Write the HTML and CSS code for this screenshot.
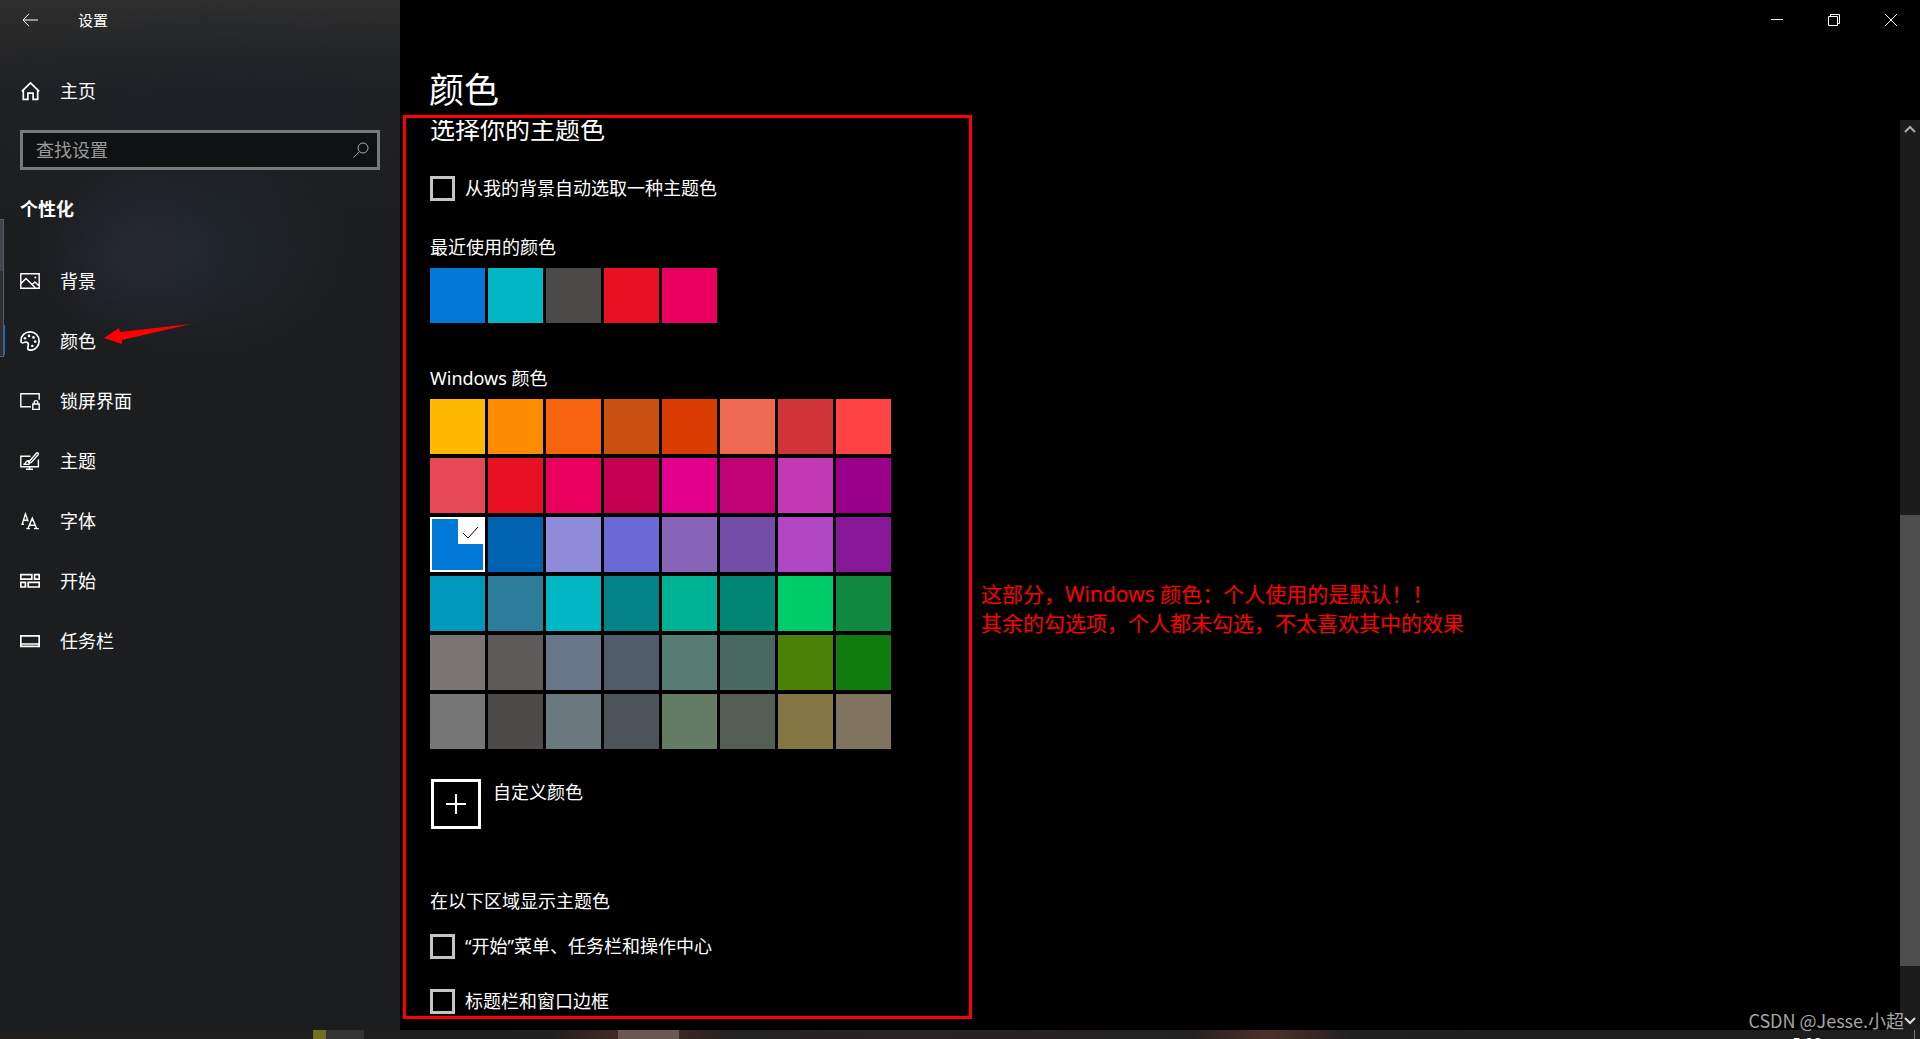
FILE: index.html
```html
<!DOCTYPE html>
<html lang="zh-CN">
<head>
<meta charset="utf-8">
<title>设置</title>
<link rel="stylesheet" href="styles.css">
</head>
<body>
<div class="app">
  <aside class="sidebar">
    <header class="side-title">
      <button class="back" type="button" aria-label="返回"><svg width="16" height="14" viewBox="0 0 16 14"><path d="M7 .8 1 7l6 6.2M1 7h15"/></svg></button>
      <span>设置</span>
    </header>
    <a class="nav-link home" href="#home">
      <svg class="icon bold" width="20" height="20" viewBox="0 0 20 20"><path d="M1.8 10.4 10.5 1.9l8.7 8.5M3.3 9v9.4h4.6v-6.2h5.2v6.2h4.6V9"/></svg>
      <span>主页</span>
    </a>
    <label class="search">
      <input type="text" placeholder="查找设置" aria-label="查找设置">
      <svg width="16" height="16" viewBox="0 0 16 16"><circle cx="10" cy="6" r="5"/><path d="M6.4 9.6.5 15.5"/></svg>
    </label>
    <h2 class="group">个性化</h2>
    <nav class="nav">
      <a class="nav-link" href="#background">
        <svg class="icon" width="20" height="20" viewBox="0 0 20 20"><path d="M.8 2.8h18.4v14.4H.8zM1 12.6l5-5.2 9.3 9.3M12.3 13.4l2.6-2.5 4.3 4.2"/><circle class="dot" cx="15.3" cy="6.6" r="1"/></svg>
        <span>背景</span></a>
      <a class="nav-link current" href="#colors">
        <svg class="icon bold" width="20" height="20" viewBox="0 0 20 20"><path d="M.9 9.9C.9 4.7 5 .9 10.2.9c5 0 8.9 3.9 8.9 9s-3.9 9.3-8.1 9.3c-2.3 0-3.3-.9-3.3-2.3 0-1.1.7-1.8.7-3 0-1.8-1.2-2.9-2.8-2.9-1.3 0-2 .8-3.1.8-1 0-1.6-.7-1.6-1.9z"/><circle class="dot" cx="5" cy="7.2" r="1.3"/><circle class="dot" cx="9" cy="4.9" r="1.3"/><circle class="dot" cx="13.5" cy="6.4" r="1.3"/><circle class="dot" cx="15.2" cy="10.6" r="1.3"/><circle class="dot" cx="12.3" cy="15" r="1.3"/></svg>
        <span>颜色</span></a>
      <a class="nav-link" href="#lock">
        <svg class="icon" width="20" height="20" viewBox="0 0 20 20"><path d="M11 15.8H.8V2.8h18.4v6M12.8 13h6.4v5.4h-6.4zM14.2 13v-1.6a1.8 1.8 0 0 1 3.6 0V13"/></svg>
        <span>锁屏界面</span></a>
      <a class="nav-link" href="#themes">
        <svg class="icon" width="20" height="20" viewBox="0 0 20 20"><path d="M10.5 5.2H.8v10.6h17.6V8.6M9.5 16v2M6 18.3h7M3.4 13.3c1.8 0 2-.8 2.4-2 .5-1.5 2.6-2 3.6-.8s.4 2.6-1.1 2.9zM9.4 10.3l7-8.1c1-1 2.6.3 1.7 1.5l-7.2 8.2M7.6 10l1.8 2"/></svg>
        <span>主题</span></a>
      <a class="nav-link" href="#fonts">
        <svg class="icon" width="20" height="20" viewBox="0 0 20 20"><path d="M2.2 13.2 5.4 3l2.8 7.6M3.4 9.2h3.7M1.4 13.3H4M8 17.6l4.3-10.4 4.3 10.4M9.4 14.2h5.7M6.4 17.6h3.5M14 17.6h4.8"/></svg>
        <span>字体</span></a>
      <a class="nav-link" href="#start">
        <svg class="icon bold" width="20" height="20" viewBox="0 0 20 20"><path d="M.8 3.6h11v4.6H.8zM14.6 3.6h4.6v4.6h-4.6zM.8 11.4h4.6V16H.8zM8.2 11.4h11V16h-11z"/></svg>
        <span>开始</span></a>
      <a class="nav-link" href="#taskbar">
        <svg class="icon bold" width="20" height="20" viewBox="0 0 20 20"><path d="M.8 4.8h18.4v10.6H.8zM1 13h18"/></svg>
        <span>任务栏</span></a>
    </nav>
    <div class="edge-panel"></div>
    <svg class="pointer" width="88" height="22" viewBox="0 0 88 22"><path d="M0 15 15 5l1 4 71-8-69 16 0 4z"/></svg>
  </aside>

  <main class="main">
    <header class="caption">
      <button type="button" aria-label="最小化"><svg width="12" height="12" viewBox="0 0 12 12"><path d="M0 5.5h12"/></svg></button>
      <button type="button" aria-label="还原"><svg width="12" height="12" viewBox="0 0 12 12"><path d="M.5 2.5h9v9h-9zM2.5 2.5v-2h9v9h-2"/></svg></button>
      <button type="button" aria-label="关闭"><svg width="12" height="12" viewBox="0 0 12 12"><path d="m0 0 12 12M12 0 0 12"/></svg></button>
    </header>
    <h1>颜色</h1>
    <div class="viewport">
      <div class="content">
        <h2>选择你的主题色</h2>
        <label class="check auto"><input type="checkbox"><span>从我的背景自动选取一种主题色</span></label>
        <h3>最近使用的颜色</h3>
        <div class="swatches recent">
          <button class="blue" aria-label="蓝色"></button><button class="seafoam" aria-label="浅海蓝"></button><button class="grey-dark" aria-label="深灰"></button><button class="red" aria-label="红色"></button><button class="rose-bright" aria-label="玫瑰红"></button>
        </div>
        <h3>Windows 颜色</h3>
        <div class="swatches">
          <button class="gold-yellow"></button><button class="gold"></button><button class="orange-bright"></button><button class="orange-dark"></button><button class="rust"></button><button class="rust-pale"></button><button class="brick"></button><button class="red-mod"></button>
          <button class="red-pale"></button><button class="red"></button><button class="rose-bright"></button><button class="rose"></button><button class="plum-light"></button><button class="plum"></button><button class="orchid-light"></button><button class="orchid"></button>
          <button class="blue selected" aria-label="默认蓝" aria-pressed="true"><svg width="25" height="25" viewBox="0 0 25 25"><path d="m5 14 5 5L20 8"/></svg></button><button class="navy"></button><button class="purple-shadow"></button><button class="purple-dark"></button><button class="iris"></button><button class="iris-spring"></button><button class="violet-light"></button><button class="violet"></button>
          <button class="cool-bright"></button><button class="cool"></button><button class="seafoam"></button><button class="seafoam-teal"></button><button class="mint-light"></button><button class="mint-dark"></button><button class="turf"></button><button class="sport"></button>
          <button class="grey"></button><button class="grey-brown"></button><button class="steel"></button><button class="metal"></button><button class="moss-pale"></button><button class="moss"></button><button class="meadow"></button><button class="green"></button>
          <button class="overcast"></button><button class="grey-dark"></button><button class="storm-light"></button><button class="storm"></button><button class="liddy"></button><button class="sage"></button><button class="camo-desert"></button><button class="camo"></button>
        </div>
        <button class="custom" type="button">
          <span class="plus"><svg width="20" height="20" viewBox="0 0 20 20"><path d="M10 0v20M0 10h20"/></svg></span>
          <span>自定义颜色</span>
        </button>
        <h3 class="areas">在以下区域显示主题色</h3>
        <label class="check"><input type="checkbox"><span>“开始”菜单、任务栏和操作中心</span></label>
        <label class="check"><input type="checkbox"><span>标题栏和窗口边框</span></label>
      </div>
      <div class="scrollbar">
        <svg width="12" height="20" viewBox="0 0 12 20"><path d="m1 12 5-5 5 5"/></svg>
        <div class="track"><div class="thumb"></div></div>
        <svg class="down" width="12" height="20" viewBox="0 0 12 20"><path d="m1 8 5 5 5-5"/></svg>
      </div>
    </div>
    <div class="frame"></div>
    <p class="note">这部分，Windows 颜色：个人使用的是默认！！<br>其余的勾选项，个人都未勾选，不太喜欢其中的效果</p>
    <p class="credit">CSDN @Jesse.小超</p>
  </main>
</div>
<footer class="taskbar">
  <span class="item yellow"></span><span class="item dim"></span><span class="item active"></span>
  <span class="clock">5:00</span><span class="peek"></span>
</footer>
</body>
</html>
```
FILE: styles.css
```css
* { box-sizing: border-box; }

body {
  margin: 0;
  min-height: 100vh;
  display: flex;
  flex-direction: column;
  background: #000;
  color: #fff;
  font: 18px/24px "Noto Sans", "Noto Sans CJK SC", sans-serif;
}

h1, h2, h3, p { margin: 0; font-weight: 400; }
h3 { font-size: 18px; }
button { padding: 0; border: 0; background: none; color: inherit; font: inherit; }
svg { display: block; flex: none; fill: none; stroke: #fff; }
a { color: inherit; text-decoration: none; }

.app { flex: 1; display: flex; }

/* Sidebar */
.sidebar {
  position: relative;
  flex: none;
  width: 400px;
  background:
    radial-gradient(ellipse 100px 90px at 135px 255px, rgba(48, 46, 68, .5), transparent),
    radial-gradient(ellipse 150px 110px at 200px 250px, rgba(36, 48, 58, .5), transparent),
    radial-gradient(ellipse 260px 110px at 230px 110px, rgba(26, 34, 42, .5), transparent),
    linear-gradient(#2e2e2e, #1f2022 90px, #1c1d1f 240px, #1c1d1e);
}

.side-title {
  display: flex;
  align-items: center;
  height: 40px;
  padding-left: 22px;
  font-size: 15px;
}
.back { width: 56px; }

.nav-link {
  display: flex;
  align-items: center;
  gap: 20px;
  height: 60px;
  padding-left: 20px;
}
.icon { stroke-width: 1.4; }
.icon.bold { stroke-width: 1.7; }
.dot { fill: #fff; stroke: none; }
.home { margin-top: 21px; }

.search {
  display: flex;
  align-items: center;
  height: 40px;
  margin: 9px 20px 0;
  padding: 0 8px 0 13px;
  border: 3px solid #77797b;
  background: #101112;
}
.search input {
  flex: 1;
  min-width: 0;
  padding: 0;
  border: 0;
  outline: 0;
  background: none;
  color: #fff;
  font: inherit;
}
.search input::placeholder { color: #9a9a9a; opacity: 1; }
.search svg { stroke: #a8a8a8; }

.group { margin: 27px 20px 30px; font-size: 18px; font-weight: 700; }

.current { position: relative; }
.current::before {
  content: "";
  position: absolute;
  left: 4px;
  top: 14px;
  width: 1px;
  height: 30px;
  background: #0078d7;
}
.edge-panel {
  position: absolute;
  left: 0;
  top: 219px;
  width: 4px;
  height: 138px;
  border: 1px solid #5c5d5f;
  border-left: 0;
  background: linear-gradient(#43444b 51px, #2e2f35 51px);
}
.pointer { position: absolute; left: 104px; top: 323px; fill: #f00; stroke: none; }

/* Main pane */
.main { position: relative; flex: 1; display: flex; flex-direction: column; }
.caption { display: flex; justify-content: flex-end; height: 40px; padding-right: 1px; }
.caption button { display: grid; place-items: center; width: 57px; }
h1 { height: 80px; padding: 26px 29px 0 29px; font-size: 35px; line-height: 48px; }

.viewport { flex: 1; display: flex; justify-content: space-between; overflow: hidden; }
.content { padding: 0 0 15px 30px; }
.content h2 { font-size: 25px; line-height: 18px; }

.check { display: flex; align-items: center; gap: 10px; width: max-content; height: 26px; }
.check input {
  appearance: none;
  width: 25px;
  height: 25px;
  margin: 0;
  border: 3px solid #c4c4c4;
}
.check + .check { margin-top: 29px; }
.auto { margin: 37px 0 34px; }

.swatches {
  display: grid;
  grid-template-columns: repeat(8, 55px);
  grid-auto-rows: 55px;
  gap: 4px 3px;
  margin-top: 9px;
}
.recent { margin-bottom: 43px; }
.selected { display: flex; justify-content: flex-end; border: 2px solid #fff; }
.selected svg { background: #fff; stroke: #000; }

.custom { display: flex; gap: 12px; margin: 30px 0 0 1px; line-height: 26px; text-align: left; }
.plus { display: grid; place-items: center; width: 50px; height: 50px; border: 3px solid #fff; }
.plus svg { stroke-width: 2; }
.areas { margin: 60px 0 20px; }

.scrollbar {
  display: flex;
  flex-direction: column;
  align-items: center;
  width: 20px;
  background: #1c1c1c;
}
.scrollbar svg { stroke: #aaa; stroke-width: 2; }
.scrollbar .down { stroke: #ddd; }
.track { flex: 1; align-self: stretch; display: flex; flex-direction: column; }
.track::before { content: ""; flex: 375; }
.track::after { content: ""; flex: 44; }
.thumb { flex: 451; background: #4d4d4d; }

/* Markup drawn over the window */
.frame { position: absolute; left: 3px; top: 115px; bottom: 11px; width: 569px; border: 3px solid #f00; }
.note { position: absolute; left: 581px; top: 580px; color: #f00; font-size: 21px; line-height: 29px; white-space: nowrap; }
.credit { position: absolute; right: 16px; bottom: -2px; color: #a5a5a5; font-family: "Noto Sans CJK SC", sans-serif; }

/* Taskbar */
.taskbar {
  display: flex;
  height: 9px;
  overflow: hidden;
  padding: 0 5px 0 313px;
  background:
    radial-gradient(ellipse 90px 40px at 640px 5px, #4e2c26, transparent),
    radial-gradient(ellipse 80px 40px at 1270px 5px, #502f2a, transparent),
    linear-gradient(90deg, #1f1e1d, #1e1e1e 500px, #282423 900px, #1e1e1e 1500px);
}
.yellow { width: 13px; background: #72701f; }
.dim { width: 38px; background: #333; }
.active { width: 61px; margin-left: 254px; background: #6a5653; }
.clock { margin: 3px 92px 0 auto; font-size: 15px; line-height: 18px; }
.peek { width: 1px; background: #777; }

/* Palette */
.gold-yellow { background: #ffb900; }
.gold { background: #ff8c00; }
.orange-bright { background: #f7630c; }
.orange-dark { background: #ca5010; }
.rust { background: #da3b01; }
.rust-pale { background: #ef6950; }
.brick { background: #d13438; }
.red-mod { background: #ff4343; }
.red-pale { background: #e74856; }
.red { background: #e81123; }
.rose-bright { background: #ea005e; }
.rose { background: #c30052; }
.plum-light { background: #e3008c; }
.plum { background: #bf0077; }
.orchid-light { background: #c239b3; }
.orchid { background: #9a0089; }
.blue { background: #0078d7; }
.navy { background: #0063b1; }
.purple-shadow { background: #8e8cd8; }
.purple-dark { background: #6b69d6; }
.iris { background: #8764b8; }
.iris-spring { background: #744da9; }
.violet-light { background: #b146c2; }
.violet { background: #881798; }
.cool-bright { background: #0099bc; }
.cool { background: #2d7d9a; }
.seafoam { background: #00b7c3; }
.seafoam-teal { background: #038387; }
.mint-light { background: #00b294; }
.mint-dark { background: #018574; }
.turf { background: #00cc6a; }
.sport { background: #10893e; }
.grey { background: #7a7574; }
.grey-brown { background: #5d5a58; }
.steel { background: #68768a; }
.metal { background: #515c6b; }
.moss-pale { background: #567c73; }
.moss { background: #486860; }
.meadow { background: #498205; }
.green { background: #107c10; }
.overcast { background: #767676; }
.grey-dark { background: #4c4a48; }
.storm-light { background: #69797e; }
.storm { background: #4a5459; }
.liddy { background: #647c64; }
.sage { background: #525e54; }
.camo-desert { background: #847545; }
.camo { background: #7e735f; }
```
